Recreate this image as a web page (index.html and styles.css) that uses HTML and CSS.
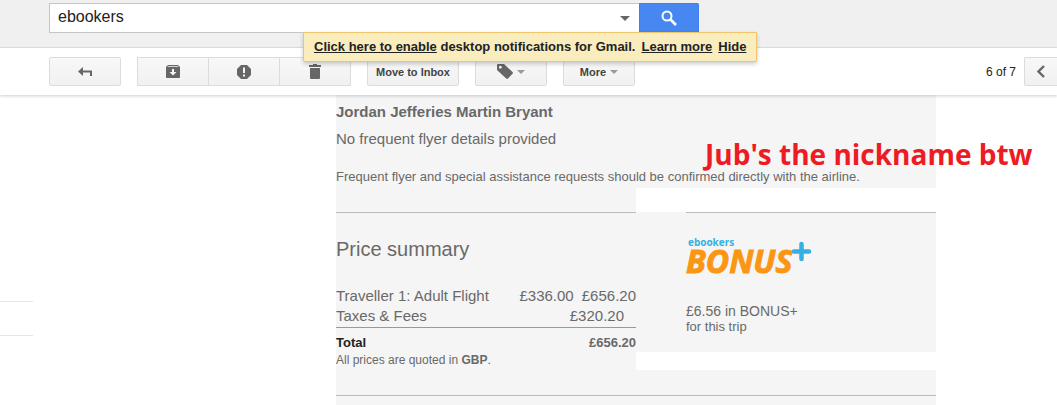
FILE: index.html
```html
<!DOCTYPE html>
<html lang="en">
<head>
    <meta charset="utf-8">
    <title>ebookers - Gmail</title>
    <link rel="stylesheet" href="styles.css">
</head>
<body>
    <header class="topbar">
        <form class="search">
            <input class="search-input" type="text" value="ebookers" aria-label="Search mail">
            <button class="search-options" type="button" aria-label="Show search options"><span class="caret"></span></button>
            <button class="search-btn" type="submit" aria-label="Search">
                <svg width="16" height="16" viewBox="0 0 16 16" fill="none" stroke="#fff">
                    <circle cx="6" cy="6" r="4.5" stroke-width="2"/>
                    <path d="M9 9l6 6" stroke-width="2.6"/>
                </svg>
            </button>
        </form>
        <div class="notice">
            <span><a href="#">Click here to enable</a> desktop notifications for Gmail.</span>
            <a class="notice-more" href="#">Learn more</a>
            <a class="notice-hide" href="#">Hide</a>
        </div>
    </header>

    <nav class="toolbar">
        <button class="tool-btn" type="button" aria-label="Back">
            <svg width="14" height="10" viewBox="0 0 14 10"><path fill="#666" d="M0 4.500L5 0v3.500h9V9h-2V5.500H5V9z"/></svg>
        </button>
        <div class="tool-group">
            <button class="tool-btn" type="button" aria-label="Archive">
                <svg width="14" height="13" viewBox="0 0 14 13"><path fill="#666" fill-rule="evenodd" d="M2 0h10l2 2v10a1 1 0 0 1-1 1H1a1 1 0 0 1-1-1V2zM2 1.200L1.500 2h11L12 1.200zM6 4v3H3.500L7 10.500 10.500 7H8V4z"/></svg>
            </button>
            <button class="tool-btn" type="button" aria-label="Report spam">
                <svg width="14" height="14" viewBox="0 0 14 14"><path fill="#666" fill-rule="evenodd" d="M4 0h6l4 4v6l-4 4H4l-4-4V4zM6 2.500V8h2V2.500zM6 9.500v2h2v-2z"/></svg>
            </button>
            <button class="tool-btn" type="button" aria-label="Delete">
                <svg width="12" height="15" viewBox="0 0 12 15"><path fill="#666" d="M4 0h4v1h4v2H0V1h4zM1 4h10v10a1 1 0 0 1-1 1H2a1 1 0 0 1-1-1z"/></svg>
            </button>
        </div>
        <button class="tool-btn tool-move" type="button">Move to Inbox</button>
        <button class="tool-btn" type="button" aria-label="Labels">
            <svg width="16" height="15" viewBox="0 0 16 15"><path fill="#666" fill-rule="evenodd" d="M1 0h6l8.500 8c.6.600.6 1.200 0 1.800L11 14.500c-.6.600-1.200.6-1.800 0L0 6V1a1 1 0 0 1 1-1zM3.300 1.800a1.400 1.400 0 1 0 .1 0z"/></svg>
            <span class="caret caret-light"></span>
        </button>
        <button class="tool-btn" type="button">More <span class="caret caret-light"></span></button>
        <div class="pager">
            <span>6 of 7</span>
            <button class="tool-btn pager-btn" type="button" aria-label="Newer">
                <svg width="8" height="13" viewBox="0 0 8 13" fill="none" stroke="#666" stroke-width="2.400"><path d="M7 1L1.500 6.500 7 12"/></svg>
            </button>
        </div>
    </nav>

    <div class="main">
        <aside class="sidebar">
            <hr>
            <hr>
        </aside>
        <main class="mail">
            <section class="travellers">
                <h3>Jordan Jefferies Martin Bryant</h3>
                <p>No frequent flyer details provided</p>
                <p class="small">Frequent flyer and special assistance requests should be confirmed directly with the airline.</p>
            </section>
            <div class="columns">
                <section class="price">
                    <h2>Price summary</h2>
                    <table>
                        <tbody>
                            <tr>
                                <td>Traveller 1: Adult Flight</td>
                                <td class="amount">£336.00</td>
                                <td class="amount">£656.20</td>
                            </tr>
                            <tr>
                                <td>Taxes &amp; Fees</td>
                                <td class="amount taxes" colspan="2">£320.20</td>
                            </tr>
                        </tbody>
                        <tfoot>
                            <tr>
                                <th scope="row">Total</th>
                                <td class="amount" colspan="2">£656.20</td>
                            </tr>
                        </tfoot>
                    </table>
                    <p class="quoted">All prices are quoted in <b>GBP</b>.</p>
                </section>
                <section class="bonus">
                    <svg class="bonus-logo" width="128" height="44" viewBox="0 0 128 44">
                        <text class="logo-small" x="2" y="10">ebookers</text>
                        <text class="logo-big" x="0" y="37">BONUS</text>
                        <path d="M115.500 8v15M108 15.500h15" stroke="#35b1e1" stroke-width="4.500" stroke-linecap="round"/>
                    </svg>
                    <p>£6.56 in BONUS+</p>
                    <p class="small">for this trip</p>
                </section>
            </div>
            <div class="mail-end"></div>
        </main>
        <div class="note">Jub's the nickname btw</div>
    </div>
</body>
</html>
```

FILE: styles.css
```css
* {
    box-sizing: border-box;
}
body {
    margin: 0;
    font-family: Arial, "Liberation Sans", sans-serif;
    font-size: 15px;
    line-height: 20px;
    color: #696969;
    background-color: #fff;
    overflow: hidden;
}
h2, h3, p {
    margin: 0;
}
button {
    font-family: inherit;
    cursor: pointer;
}

/* search bar */
.topbar {
    position: relative;
    height: 48px;
    padding: 3px 0 0 49px;
    background-color: #f0f0f0;
    border-bottom: 1px solid #e2e2e2;
}
.search {
    display: flex;
    width: 100%;
    max-width: 650px;
    height: 30px;
    background-color: #fff;
    border: 1px solid #c6c6c6;
    border-right: none;
}
.search-input {
    flex: 1;
    min-width: 0;
    padding: 0 8px 2px;
    border: none;
    outline: none;
    font-family: inherit;
    font-size: 16px;
    color: #222;
}
.search-options {
    display: flex;
    align-items: center;
    justify-content: center;
    width: 28px;
    padding: 0;
    border: none;
    background: none;
}
.search-btn {
    width: 60px;
    margin: -1px 0;
    padding: 2px 0 0;
    border: 1px solid #4080ee;
    border-radius: 0 2px 2px 0;
    background-color: #4787f2;
}
.caret {
    border: 5px solid transparent;
    border-top-color: #666;
    border-bottom: none;
}
.caret-light {
    border-width: 4px;
    border-bottom: none;
    border-top-color: #999;
}
.notice {
    position: absolute;
    z-index: 2;
    top: 32px;
    left: 303px;
    display: flex;
    height: 30px;
    padding: 0 10px;
    align-items: center;
    font-size: 13px;
    font-weight: bold;
    white-space: nowrap;
    color: #222;
    background-color: #f9edbe;
    border: 1px solid #f0c36d;
    border-radius: 0 0 2px 2px;
    box-shadow: 0 2px 4px rgba(0,0,0,0.2);
}
.notice a {
    color: #222;
}
.notice-more {
    margin-left: 6px;
}
.notice-hide {
    margin-left: 6px;
}

/* mail toolbar */
.toolbar {
    position: relative;
    z-index: 1;
    display: flex;
    align-items: center;
    gap: 16px;
    height: 47px;
    padding-left: 49px;
    background-color: #fff;
    box-shadow: 0 1px 3px rgba(0,0,0,0.2);
}
.tool-btn {
    display: flex;
    flex-shrink: 0;
    align-items: center;
    justify-content: center;
    gap: 4px;
    width: 72px;
    height: 29px;
    padding: 0;
    border: 1px solid #dcdcdc;
    border-radius: 2px;
    background: linear-gradient(#f8f8f8, #f1f1f1);
    font-size: 11px;
    font-weight: bold;
    color: #444;
}
.tool-move {
    width: 92px;
}
.tool-group {
    display: flex;
}
.tool-group .tool-btn {
    border-radius: 0;
}
.tool-group .tool-btn + .tool-btn {
    margin-left: -1px;
}
.pager {
    display: flex;
    align-items: center;
    gap: 8px;
    margin-left: auto;
    font-size: 12px;
    color: #222;
}
.pager-btn {
    width: 33px;
    border-right: none;
    border-radius: 2px 0 0 2px;
}

/* message */
.main {
    position: relative;
    display: flex;
}
.sidebar {
    width: 336px;
    flex-shrink: 0;
    padding-top: 206px;
}
.sidebar hr {
    width: 33px;
    margin: 0 0 33px;
    border: none;
    border-top: 1px solid #e5e5e5;
}
.mail {
    flex: 1;
    max-width: 600px;
}
.travellers {
    padding: 7px 0 1px;
    background-color: #f5f5f5;
}
.travellers h3 {
    font-size: 15px;
}
.travellers p {
    margin-top: 7px;
}
.travellers .small {
    margin-top: 18px;
}
.small {
    font-size: 13px;
}
.columns {
    display: grid;
    grid-template-columns: 1fr 1fr;
    align-items: start;
}
.price {
    height: 182px;
    padding-top: 24px;
    background: linear-gradient(#bbb, #bbb) 0 24px / 100% 1px no-repeat #f5f5f5;
}
.price h2 {
    margin-top: 24px;
    font-size: 20px;
    font-weight: normal;
    line-height: 26px;
}
.price table {
    width: 100%;
    margin-top: 23px;
    border-collapse: collapse;
}
.price td, .price th {
    padding: 0;
    height: 21px;
    text-align: left;
}
.price .amount {
    text-align: right;
}
.price .taxes {
    padding-right: 12px;
}
.price tfoot {
    border-top: 1px solid #999;
    font-size: 13px;
    font-weight: bold;
}
.price tfoot td, .price tfoot th {
    padding-top: 5px;
}
.price tfoot th {
    color: #222;
}
.quoted {
    font-size: 12px;
    line-height: 14px;
}
.bonus {
    height: 140px;
    margin-top: 24px;
    padding: 24px 0 0 50px;
    background: linear-gradient(#bbb, #bbb) 50px 0 / 100% 1px no-repeat #f5f5f5;
    font-size: 14px;
    line-height: 16px;
}
.bonus p:first-of-type {
    margin-top: 23px;
}
.bonus-logo {
    display: block;
    overflow: visible;
}
.logo-small {
    font: bold 10px "Open Sans", sans-serif;
    fill: #35b1e1;
}
.logo-big {
    font: italic bold 32px "Open Sans", sans-serif;
    fill: #fb9614;
    stroke: #fb9614;
}
.mail-end {
    height: 35px;
    background: linear-gradient(#bbb, #bbb) 0 25px / 100% 1px no-repeat #f5f5f5;
}
.note {
    position: absolute;
    top: 41px;
    left: 705px;
    font: bold 28px/36px "Open Sans", sans-serif;
    white-space: nowrap;
    color: #ed1c24;
}
```
